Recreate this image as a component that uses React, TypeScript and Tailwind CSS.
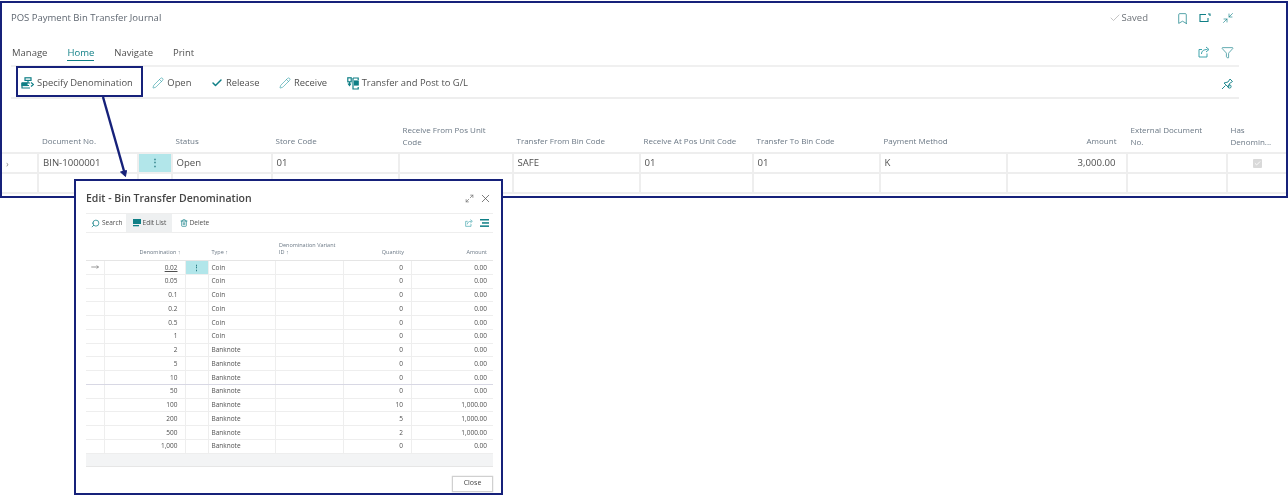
import { Bookmark, Check, Filter, Maximize2, Minimize2, MoveRight, Pencil, Search, Trash2, X } from "lucide-react";

const journalCols = "grid-cols-[37px_99.5px_34px_100px_127px_114px_127px_113px_127px_127px_120px_100px_58px]";
const denomCols = "grid-cols-[18.5px_81px_23px_67.5px_68px_68px_81px]";

const denominations = [
    ["0.02", "Coin", "0", "0.00"],
    ["0.05", "Coin", "0", "0.00"],
    ["0.1", "Coin", "0", "0.00"],
    ["0.2", "Coin", "0", "0.00"],
    ["0.5", "Coin", "0", "0.00"],
    ["1", "Coin", "0", "0.00"],
    ["2", "Banknote", "0", "0.00"],
    ["5", "Banknote", "0", "0.00"],
    ["10", "Banknote", "0", "0.00"],
    ["50", "Banknote", "0", "0.00"],
    ["100", "Banknote", "10", "1,000.00"],
    ["200", "Banknote", "5", "1,000.00"],
    ["500", "Banknote", "2", "1,000.00"],
    ["1,000", "Banknote", "0", "0.00"],
];

function DenomIcon() {
    return (
        <svg width="13" height="12" viewBox="0 0 13 12" fill="none" stroke="#0f7f86" strokeWidth="1.2">
            <rect x="4" y="0.8" width="6" height="2.6" />
            <path d="M7 3.4v2M1 6h8M1 6v5h8" />
            <path d="M1 8.5h7M10 5.5l2.5 2-2.5 2" />
            <rect x="1" y="6" width="5" height="2.5" fill="#0f7f86" />
        </svg>
    );
}

function TransferIcon() {
    return (
        <svg width="12" height="13" viewBox="0 0 12 13" fill="none" stroke="#0f7f86" strokeWidth="1.2">
            <rect x="0.8" y="0.8" width="3.4" height="4" />
            <rect x="7.6" y="4" width="3.6" height="4" fill="#0f7f86" />
            <path d="M2.5 5v3M6 1h5.2v2M6 1v11h5.2v-2" />
            <path d="M1 6.5l1.5 2 1.5-2" />
        </svg>
    );
}

function ShareBoxIcon({ size }: { size: number }) {
    return (
        <svg width={size} height={size} viewBox="0 0 12 12" fill="none" stroke="#2a9aa3" strokeWidth="0.9">
            <path d="M4 3.5H1v7.5h8V7.5" />
            <path d="M3.5 8c0-3 2-4.5 6-4.5M8 1l3 2.5L8 6" />
        </svg>
    );
}

function ListIcon() {
    return (
        <svg width="9" height="8" viewBox="0 0 9 8" fill="#0f7f86">
            <rect x="0" y="0" width="9" height="1.5" />
            <rect x="2" y="3.2" width="7" height="1.5" />
            <rect x="0" y="6.4" width="9" height="1.5" />
        </svg>
    );
}

function JournalAction({ icon, label }: { icon: React.ReactNode; label: string }) {
    return (
        <div className="flex items-center gap-[3px]">
            {icon}
            <span>{label}</span>
        </div>
    );
}

function JournalCell({ children, className = "" }: { children?: React.ReactNode; className?: string }) {
    return <div className={`border-r-2 border-[#eeeeee] px-1 pt-[1px] flex items-center ${className}`}>{children}</div>;
}

function HeaderLabel({ children, twoLines, className = "" }: { children?: React.ReactNode; twoLines?: boolean; className?: string }) {
    return <div className={`self-end px-[3px] leading-[11.5px] ${twoLines ? "pb-[5px]" : "pb-[6px]"} ${className}`}>{children}</div>;
}

function Modal() {
    return (
        <div className="absolute left-[74px] top-[179px] w-[429px] h-[316px] border-2 border-[#16217a] bg-white z-10 pl-[10px] pr-[8px] flex flex-col text-[#505050]">
            <div className="h-[32px] shrink-0 flex items-center justify-between pt-[3px]">
                <span className="text-[10.5px] font-semibold text-[#444444]">Edit - Bin Transfer Denomination</span>
                <div className="flex items-center gap-[5px] pr-[1px]">
                    <Maximize2 size={9} color="#777777" />
                    <X size={13} color="#555555" strokeWidth={1.4} />
                </div>
            </div>
            <div className="h-[20px] shrink-0 border-y border-[#eeeeee] flex items-center justify-between text-[6.5px]">
                <div className="flex items-stretch h-full">
                    <div className="flex items-center gap-[2px] pl-[5px] pr-[3px]">
                        <Search size={9} color="#0f7f86" className="-scale-x-100" />
                        <span>Search</span>
                    </div>
                    <div className="flex items-center gap-[2px] bg-[#eef0f1] px-[7px] w-[46px] whitespace-nowrap">
                        <svg width="8" height="8" viewBox="0 0 8 8" fill="#0f7f86" className="shrink-0"><rect width="8" height="5" /><rect y="6" width="6" height="1.3" /></svg>
                        <span>Edit List</span>
                    </div>
                    <div className="flex items-center gap-[2px] pl-[8px]">
                        <Trash2 size={8} color="#0f7f86" />
                        <span>Delete</span>
                    </div>
                </div>
                <div className="flex items-center gap-[7px] pr-[4px]">
                    <ShareBoxIcon size={8} />
                    <ListIcon />
                </div>
            </div>
            <div className={`grid ${denomCols} h-[27px] shrink-0 text-[5.5px] text-[#6b7885]`}>
                <div />
                <div className="self-end text-right pr-[5px] pb-[4px]">Denomination ↑</div>
                <div />
                <div className="self-end pl-[3px] pb-[4px]">Type ↑</div>
                <div className="self-end pl-[3px] pb-[4px] leading-[7px]">Denomination Variant<br />ID ↑</div>
                <div className="self-end text-right pr-[8px] pb-[4px]">Quantity</div>
                <div className="self-end text-right pr-[6px] pb-[4px]">Amount</div>
            </div>
            <div className="border-t border-[#e5e5e5] text-[6.5px]">
                {denominations.map(([value, type, quantity, amount], i) => (
                    <div key={value} className={`grid ${denomCols} h-[13.75px] border-b ${i === 8 ? "border-[#d8d8e4]" : "border-[#eeeeee]"}`}>
                        <div className="border-r border-[#eeeeee] flex items-center justify-center">
                            {i === 0 && <MoveRight size={8} color="#666666" />}
                        </div>
                        <div className={`border-r border-[#eeeeee] flex items-center justify-end pr-[7px] ${i === 0 ? "underline" : ""}`}>{value}</div>
                        <div className={`border-r border-[#eeeeee] flex items-center justify-center ${i === 0 ? "bg-[#b2e6ea] text-[#2d7f86] font-bold" : ""}`}>{i === 0 ? "⋮" : ""}</div>
                        <div className="border-r border-[#eeeeee] flex items-center pl-[3px]">{type}</div>
                        <div className="border-r border-[#eeeeee]" />
                        <div className="border-r border-[#eeeeee] flex items-center justify-end pr-[8px]">{quantity}</div>
                        <div className="flex items-center justify-end pr-[6px]">{amount}</div>
                    </div>
                ))}
            </div>
            <div className="h-[13px] shrink-0 bg-[#f3f4f5] border-b border-[#e6e6e6]" />
            <div className="flex justify-end pt-[9px]">
                <div className="w-[41px] h-[16px] border border-[#d0d0d0] shadow-[0_0_1px_#bbbbbb] flex items-center justify-center text-[7px] text-[#444444]">Close</div>
            </div>
        </div>
    );
}

export default function App() {
    return (
        <div className="relative w-[1288px] h-[495px] bg-white overflow-hidden font-['Open_Sans',sans-serif] text-[#505050] blur-[0.35px]">
            <div className="mt-[1px] h-[197px] border-2 border-[#16217a] flex flex-col">
                <div className="h-[29px] shrink-0 flex items-center justify-between pl-[9px] pr-[52px] pt-[1px] text-[9.5px] text-[#5e6670]">
                    <span>POS Payment Bin Transfer Journal</span>
                    <div className="flex items-center">
                        <Check size={12} color="#888888" strokeWidth={1} />
                        <span className="ml-[1px] mr-[28px] text-[#6d7278]">Saved</span>
                        <Bookmark size={13} color="#0f7f86" strokeWidth={1.3} className="mr-[10px]" />
                        <svg width="12" height="10" viewBox="0 0 12 10" fill="none" stroke="#0f7f86" strokeWidth="1.1" className="mr-[11px]"><path d="M7 1.5H1v7h8V5" /><path d="M9 1h2v2" /></svg>
                        <Minimize2 size={12} color="#0f7f86" strokeWidth={1.3} />
                    </div>
                </div>
                <div className="mx-[9px] mr-[47px] h-[35px] shrink-0 border-b-2 border-[#f0f0f0] flex items-center justify-between text-[9.5px]">
                    <div className="flex gap-[20px] pl-[1px] pt-[9px]">
                        <span>Manage</span>
                        <span className="relative text-[#0f7f86]">
                            Home
                            <span className="absolute left-0 right-0 -bottom-[1px] h-[1.5px] bg-[#0f7f86]" />
                        </span>
                        <span>Navigate</span>
                        <span>Print</span>
                    </div>
                    <div className="flex items-center gap-[11px] pr-[5px] pt-[7px]">
                        <ShareBoxIcon size={12} />
                        <Filter size={13} color="#0f7f86" strokeWidth={1.2} />
                    </div>
                </div>
                <div className="mx-[9px] mr-[47px] h-[32px] shrink-0 border-b-2 border-[#eeeeee] flex items-center justify-between text-[9.4px] pl-[10px] pt-[3px]">
                    <div className="flex items-center gap-[19.5px]">
                        <JournalAction icon={<DenomIcon />} label="Specify Denomination" />
                        <JournalAction icon={<Pencil size={12} color="#2a9aa3" strokeWidth={1.2} />} label="Open" />
                        <JournalAction icon={<Check size={12} color="#0f7f86" strokeWidth={3} />} label="Release" />
                        <JournalAction icon={<Pencil size={12} color="#2a9aa3" strokeWidth={1.2} />} label="Receive" />
                        <JournalAction icon={<TransferIcon />} label="Transfer and Post to G/L" />
                    </div>
                    <svg width="12" height="12" viewBox="0 0 12 12" fill="none" stroke="#0f7f86" strokeWidth="0.9" className="mr-[6px]"><path d="M1 11l3.5-3.5M3 5l4-1 2-3 2.5 2.5-3 2-1 4z" /><circle cx="8.5" cy="8.5" r="1.6" /></svg>
                </div>
                <div className={`grid ${journalCols} h-[53px] shrink-0 text-[8px] text-[#6b7885]`}>
                    <div />
                    <HeaderLabel>Document No.</HeaderLabel>
                    <div />
                    <HeaderLabel>Status</HeaderLabel>
                    <HeaderLabel>Store Code</HeaderLabel>
                    <HeaderLabel twoLines>Receive From Pos Unit<br />Code</HeaderLabel>
                    <HeaderLabel>Transfer From Bin Code</HeaderLabel>
                    <HeaderLabel>Receive At Pos Unit Code</HeaderLabel>
                    <HeaderLabel>Transfer To Bin Code</HeaderLabel>
                    <HeaderLabel>Payment Method</HeaderLabel>
                    <HeaderLabel className="text-right pr-[11px]">Amount</HeaderLabel>
                    <HeaderLabel twoLines>External Document<br />No.</HeaderLabel>
                    <HeaderLabel twoLines>Has<br />Denomin...</HeaderLabel>
                </div>
                <div className={`grid ${journalCols} h-[18px] shrink-0 border-y-2 border-[#eeeeee] box-content text-[9.6px]`}>
                    <JournalCell className="text-[#8a8a8a] text-[9px] px-0">›</JournalCell>
                    <JournalCell>BIN-1000001</JournalCell>
                    <JournalCell className="bg-[#b2e6ea] justify-center font-bold text-[#2d7f86] px-0 border-r-0">⋮</JournalCell>
                    <JournalCell>Open</JournalCell>
                    <JournalCell>01</JournalCell>
                    <JournalCell />
                    <JournalCell>SAFE</JournalCell>
                    <JournalCell>01</JournalCell>
                    <JournalCell>01</JournalCell>
                    <JournalCell>K</JournalCell>
                    <JournalCell className="justify-end pr-[10px]">3,000.00</JournalCell>
                    <JournalCell />
                    <div className="flex items-center pl-[25px]">
                        <div className="w-[9px] h-[9px] bg-[#d9d9d9] rounded-[1px] flex items-center justify-center">
                            <Check size={7} color="#ffffff" strokeWidth={3} />
                        </div>
                    </div>
                </div>
                <div className={`grid ${journalCols} h-[18px] shrink-0 border-b-2 border-[#eeeeee] box-content`}>
                    {Array.from({ length: 12 }).map((_, i) => (
                        <JournalCell key={i} className={i === 1 ? "border-r-0" : ""} />
                    ))}
                    <div />
                </div>
            </div>
            <div className="absolute left-[16px] top-[66px] w-[127px] h-[31px] border-2 border-[#16217a] z-10" />
            <svg className="absolute left-[98px] top-[96px] z-10" width="36" height="86" viewBox="0 0 36 86" fill="none">
                <path d="M5 1l21 74" stroke="#16217a" strokeWidth="2.4" />
                <path d="M22.5 76l6-1.5-1 6z" fill="#16217a" stroke="#16217a" />
            </svg>
            <Modal />
        </div>
    );
}
